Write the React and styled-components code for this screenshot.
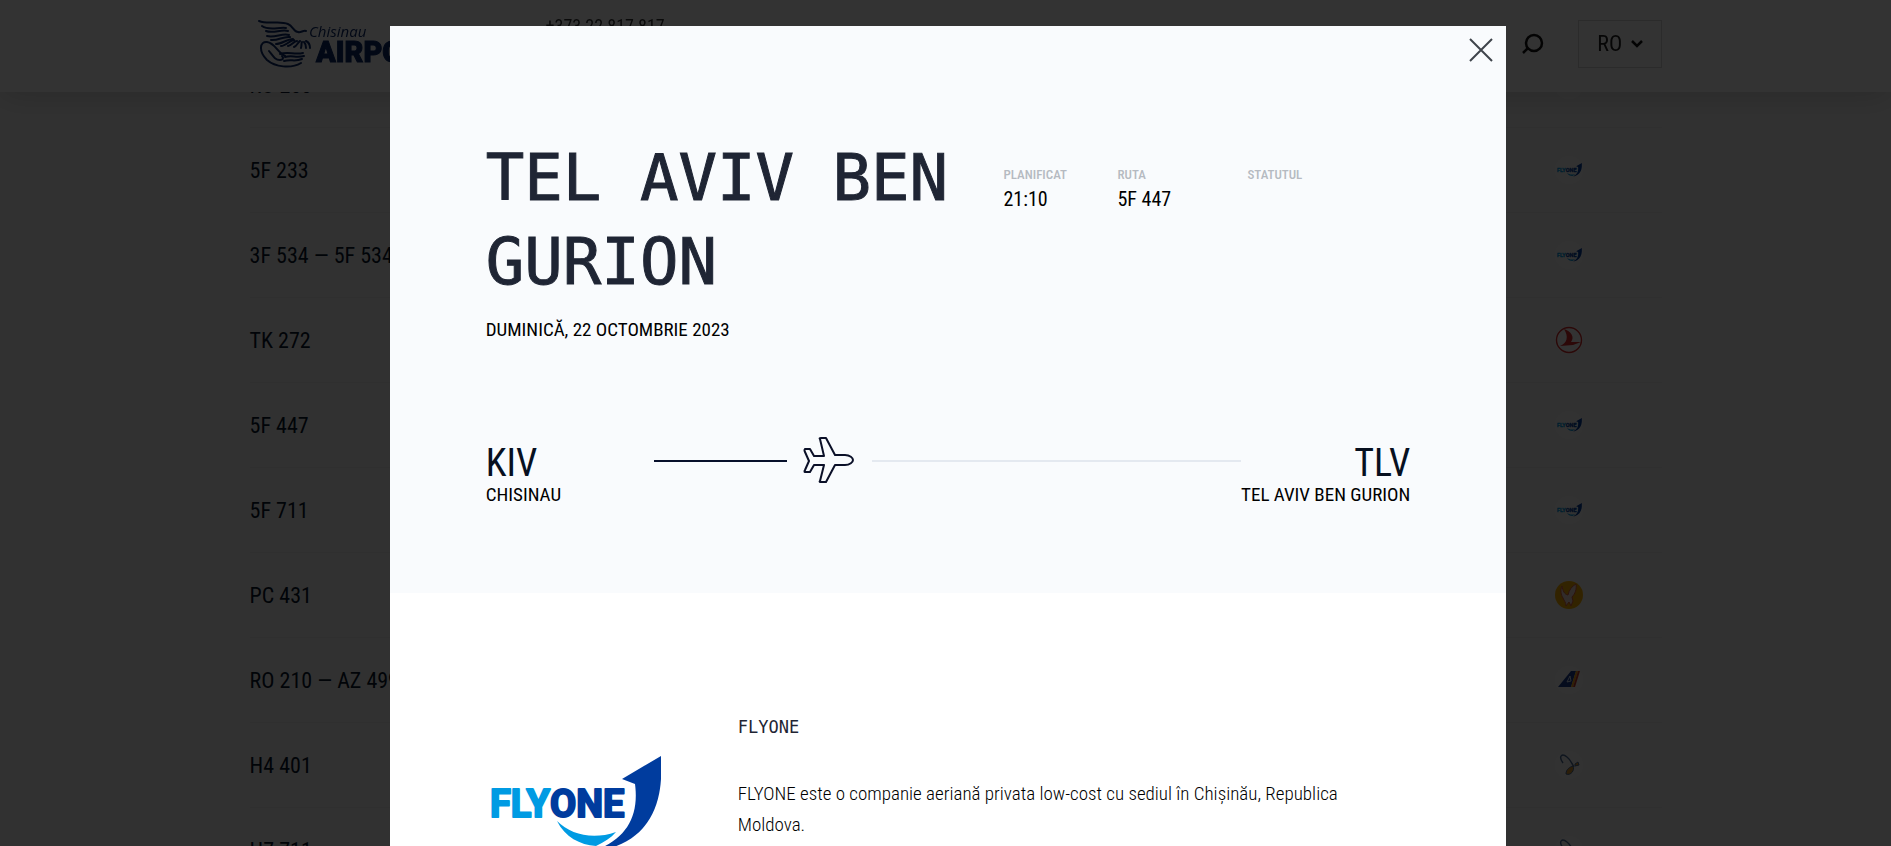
import React from "react";
import styled, { createGlobalStyle } from 'styled-components';

const GlobalStyle = createGlobalStyle`
* {
	box-sizing: border-box;
}
body {
	margin: 0;
	background: #f5f5f5;
	color: #07142b;
	font-family: 'Roboto Condensed', 'Liberation Sans Narrow', Roboto, sans-serif;
	overflow: hidden;
}
`
const Header = styled.header`
position: fixed;
top: 0;
left: 0;
right: 0;
z-index: 1;
display: flex;
align-items: center;
height: 92px;
padding: 0 12.1% 4px 13.2%;
background: #fff;
box-shadow: 0 4px 32px rgba(0, 0, 0, 0.16);
`
const Brand = styled.a`
display: flex;
margin-left: 8px;
color: #0b2a6b;
`
const Phone = styled.a`
align-self: flex-start;
margin: 14px auto 0 98px;
color: #333;
font-size: 18px;
line-height: 24px;
text-decoration: none;
`
const SearchButton = styled.button`
display: flex;
margin-right: 34px;
padding: 0;
border: 0;
background: none;
color: #111;
`
const LangBox = styled.label`
display: grid;
grid-template-columns: 1fr 12px;
align-items: center;
width: 84px;
height: 48px;
padding: 0 18px;
border: 1px solid #d8d8d8;
`
const LangSelect = styled.select`
appearance: none;
width: 28px;
padding: 0;
border: 0;
background: none;
color: #222;
font: 22px/26px 'Roboto Condensed', 'Liberation Sans Narrow', Roboto, sans-serif;
`
const Board = styled.main`
height: 100vh;
overflow: hidden;
padding: 43px 12.1% 0 13.2%;
`
const FlightRow = styled.div`
display: flex;
align-items: center;
justify-content: space-between;
height: 85px;
padding-right: 79px;
border-bottom: 1px solid #ececec;
font-size: 22px;
`
const AirlineBadge = styled.span`
display: flex;
width: 28px;
height: 28px;
border-radius: 50%;
background: ${props => props.$bg || '#fafafa'};
`
const Overlay = styled.div`
position: fixed;
inset: 0;
z-index: 2;
display: flex;
justify-content: center;
padding: 26px 0 0 5px;
background: rgba(0, 0, 0, 0.8);
overflow: hidden;
`
const Modal = styled.section`
position: relative;
width: 59.2%;
min-height: 100vh;
background: #fff;
color: #000;
`
const CloseButton = styled.button`
position: absolute;
top: 11px;
right: 12px;
display: flex;
padding: 0;
border: 0;
background: none;
color: #3f444b;
cursor: pointer;
`
const Summary = styled.div`
height: 567px;
padding: 110px 96px 0;
background: #f9fbfd;
`
const SummaryTop = styled.div`
display: grid;
grid-template-columns: 56% 1fr;
`
const Title = styled.h1`
margin: 0;
color: #1f2534;
font: 400 64px/84px 'DejaVu Sans Mono', monospace;
-webkit-text-stroke: 1px #1f2534;
`
const FlightDate = styled.p`
margin: 12px 0 0;
font-size: 19px;
line-height: 28px;
`
const Facts = styled.dl`
display: flex;
margin: 29px 0 0;
`
const Fact = styled.div`
width: ${props => props.$width};
dt {
	color: #b5bac1;
	font-size: 13px;
	font-weight: 500;
	line-height: 20px;
}
dd {
	margin: 0;
	font-size: 20px;
	font-weight: 400;
	line-height: 28px;
}
`
const Route = styled.div`
display: grid;
grid-template-columns: 168px 133px auto 1fr auto;
margin-top: 92px;
`
const Stop = styled.div`
padding-top: 5px;
text-align: ${props => props.$align || 'left'};
`
const Code = styled.div`
color: #07101f;
font-size: 38px;
line-height: 44px;
`
const City = styled.div`
font-size: 19px;
line-height: 20px;
`
const Track = styled.div`
height: 2px;
margin-top: 24px;
background: ${props => props.$done ? '#07102b' : '#e4e9f0'};
`
const PlaneBox = styled.div`
display: flex;
height: 50px;
margin: 0 18px 0 16px;
color: #0b1028;
`
const Airline = styled.div`
display: grid;
grid-template-columns: 252px 1fr;
padding: 119px 96px 0;
`
const AirlineLogo = styled.div`
padding: 44px 0 0 4px;
`
const AirlineName = styled.h2`
margin: 0;
color: #1f2534;
font: 400 17px/30px 'DejaVu Sans Mono', monospace;
`
const About = styled.p`
margin: 36px 0 0;
padding-right: 40px;
font-size: 19px;
font-weight: 300;
line-height: 31px;
`

const ChisinauLogo = () => (
    <svg width="190" height="48" viewBox="0 0 190 48" fill="none" stroke="currentColor" strokeWidth="2" strokeLinecap="round">
        <path d="M1 1c10 4 20-1 29 3 5 2 6 8 10 8 3 1 5-2 8-1M4 6c7 5 16 1 24 2M8 11c7 3 15-2 22 0M9 16c8 2 15-3 22-1M13 20c7 1 12-4 19-3M18 24c6 0 11-5 17-5M23 26c5 0 9-6 13-6M30 26c4-1 6-5 9-5M36 27c3-1 4-5 6-6M43 28c1-3 0-5 1-6M48 28c0-2-1-5-2-6M52 28c0-3-2-6-4-7" />
        <path d="M43 43c-10 6-26 4-34-3C0 31 2 21 9 22c8 1 10 10 18 14" strokeWidth="2" />
        <path d="M11 31c4 5 6 9 11 9 3 0 4-2 2-4M22 34c8-3 14 1 23-1M27 37c7-2 11 1 19-1M26 41c7-2 11 1 18-2" />
        <text x="51" y="17" fill="currentColor" stroke="none" fontFamily="Open Sans, sans-serif" fontStyle="italic" fontSize="15">Chisinau</text>
        <text x="58" y="42" fill="currentColor" strokeWidth="1" fontFamily="Roboto, sans-serif" fontWeight="900" fontSize="29">AIRPORT</text>
    </svg>
);

const FlyOneLogo = ({ width }) => (
    <svg width={width} viewBox="0 0 172 92" style={{ margin: 'auto' }}>
        <g fontFamily="Roboto, sans-serif" fontWeight="700" fontSize="38" strokeWidth="2" strokeLinejoin="round">
            <text x="0" y="61" fill="#009be3" stroke="#009be3">FLY</text>
            <text x="60" y="61" fill="#003c9e" stroke="#003c9e">ONE</text>
        </g>
        <path fill="#009be3" d="M67 65c14 14 36 19 59 11-5 6-12 10-20 14-16-1-31-9-39-25z" />
        <path fill="#003c9e" d="M171 0v23c-2 34-18 59-50 69h-10c27-12 38-34 34-64l-13-5z" />
    </svg>
);

const TurkishLogo = () => (
    <svg viewBox="0 0 28 28">
        <circle cx="14" cy="14" r="12.5" fill="#fff" stroke="#d92b2b" strokeWidth="1.4" />
        <path fill="#d92b2b" d="M9 3c7 2 11 8 7 13l10 0-8 3-13 1c7-3 9-9 4-17z" />
    </svg>
);

const PegasusLogo = () => (
    <svg viewBox="0 0 28 28" fill="#f3d9d0" stroke="#e2603c" strokeWidth="1">
        <path d="M21 3c1 5-1 10-4 13l1 4-2 5-2-4-3 4c0-4-2-5-3-8-2-3-3-8-1-12 1 5 2 8 6 9 1-5 4-9 8-11z" />
    </svg>
);

const TaromLogo = () => (
    <svg viewBox="0 0 28 28">
        <path fill="#1d3f8f" d="M3 21L16 5h5l-5 16z" />
        <path fill="#f2a516" d="M21 5h2l-5 16h-2z" />
        <path fill="#c93a2b" d="M23 5h2l-5 16h-2z" />
        <path stroke="#d7e4f7" fill="none" d="M12 16l3-6 1 5-4 1" />
    </svg>
);

const HiSkyLogo = () => (
    <svg viewBox="0 0 28 28" fill="none">
        <path stroke="#4a6b96" strokeWidth="1.5" d="M8 12C3 5 7 2 12 6c4 3 5 7 7 10" />
        <path fill="#d9962e" stroke="#4a6b96" d="M11 23c0-5 4-7 7-8 2 4-2 10-7 8zM20 13l3-2 1 3-4 1z" />
    </svg>
);

const PlaneIcon = () => (
    <svg width="51" height="50" viewBox="0 0 51 50" fill="none" stroke="currentColor" strokeWidth="2" strokeLinejoin="round">
        <path d="M17 3q-1-1 1-1h5l9 17h10c5 0 8 3 8 5s-3 5-8 5H32l-9 17h-5q-2 0-1-1l4-16H11l-4 7H2q-1 0 0-2l4-9-4-9q-1-2 0-3h5l4 7h10z" />
    </svg>
);

const flights = [
    { code: 'RO 203', logo: 'tarom' },
    { code: '5F 233', logo: 'flyone' },
    { code: '3F 534 — 5F 534', logo: 'flyone' },
    { code: 'TK 272', logo: 'turkish' },
    { code: '5F 447', logo: 'flyone' },
    { code: '5F 711', logo: 'flyone' },
    { code: 'PC 431', logo: 'pegasus' },
    { code: 'RO 210 — AZ 499', logo: 'tarom' },
    { code: 'H4 401', logo: 'hisky' },
    { code: 'H7 711', logo: 'hisky' },
];

const logos = {
    flyone: <FlyOneLogo width="25" />,
    turkish: <TurkishLogo />,
    pegasus: <PegasusLogo />,
    tarom: <TaromLogo />,
    hisky: <HiSkyLogo />,
};

class App extends React.Component {
    state = { open: true }

    close = () => {
        this.setState({ open: false });
    }

    renderModal() {
        return (
            <Overlay>
                <Modal role="dialog" aria-labelledby="destination">
                    <CloseButton aria-label="Închide" onClick={this.close}>
                        <svg width="26" height="26" viewBox="0 0 26 26" stroke="currentColor" strokeWidth="2">
                            <path d="M2 2l22 22M24 2L2 24" />
                        </svg>
                    </CloseButton>
                    <Summary>
                        <SummaryTop>
                            <div>
                                <Title id="destination">TEL AVIV BEN GURION</Title>
                                <FlightDate>DUMINICĂ, 22 OCTOMBRIE 2023</FlightDate>
                            </div>
                            <Facts>
                                <Fact $width="114px"><dt>PLANIFICAT</dt><dd>21:10</dd></Fact>
                                <Fact $width="130px"><dt>RUTA</dt><dd>5F 447</dd></Fact>
                                <Fact $width="80px"><dt>STATUTUL</dt><dd></dd></Fact>
                            </Facts>
                        </SummaryTop>
                        <Route>
                            <Stop>
                                <Code>KIV</Code>
                                <City>CHISINAU</City>
                            </Stop>
                            <Track $done />
                            <PlaneBox><PlaneIcon /></PlaneBox>
                            <Track />
                            <Stop $align="right">
                                <Code>TLV</Code>
                                <City>TEL AVIV BEN GURION</City>
                            </Stop>
                        </Route>
                    </Summary>
                    <Airline>
                        <AirlineLogo><FlyOneLogo width="172" /></AirlineLogo>
                        <div>
                            <AirlineName>FLYONE</AirlineName>
                            <About>FLYONE este o companie aeriană privata low-cost cu sediul în Chișinău, Republica Moldova.</About>
                        </div>
                    </Airline>
                </Modal>
            </Overlay>
        )
    }

    render() {
        return (
            <>
                <GlobalStyle />
                <Header>
                    <Brand href="#" aria-label="Chisinau Airport"><ChisinauLogo /></Brand>
                    <Phone href="tel:+37322817817">+373 22 817 817</Phone>
                    <SearchButton aria-label="Căutare">
                        <svg width="24" height="24" viewBox="0 0 24 24" fill="none" stroke="currentColor" strokeWidth="2.5">
                            <circle cx="14" cy="11" r="8" />
                            <path d="M8 16l-5 5" />
                        </svg>
                    </SearchButton>
                    <LangBox>
                        <LangSelect aria-label="Limba" defaultValue="RO">
                            <option>RO</option>
                        </LangSelect>
                        <svg width="12" height="8" viewBox="0 0 12 8" fill="none" stroke="#111" strokeWidth="2.5">
                            <path d="M1 1l5 5 5-5" />
                        </svg>
                    </LangBox>
                </Header>
                <Board>
                    {flights.map(flight => (
                        <FlightRow key={flight.code}>
                            <span>{flight.code}</span>
                            <AirlineBadge $bg={flight.logo === 'pegasus' ? '#f9b000' : undefined}>{logos[flight.logo]}</AirlineBadge>
                        </FlightRow>
                    ))}
                </Board>
                {this.state.open && this.renderModal()}
            </>
        )
    }
}
export default App;
